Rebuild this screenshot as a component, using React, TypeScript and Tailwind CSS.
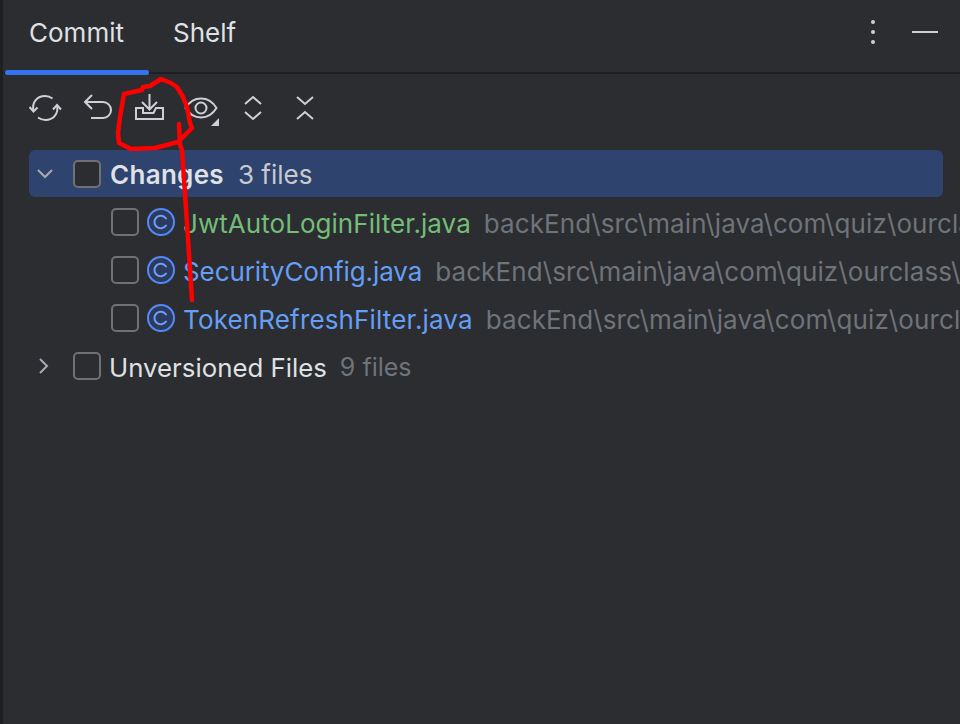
import React from 'react';

const font = { fontFamily: 'Inter, "Noto Sans", sans-serif' };

function Check() {
  return <span className="h-[28px] w-[28px] shrink-0 rounded-[5px] border-2 border-[#6f7175] bg-[#2b2d30]" />;
}

function ClassIcon() {
  return (
    <svg width="28" height="28" viewBox="0 0 28 28" className="block shrink-0" fill="none">
      <circle cx="14" cy="14" r="13" fill="#2c3a5e" stroke="#548af7" strokeWidth="2" />
      <path d="M19 10.500a6.300 6.300 0 1 0 0 7" stroke="#6ea0f8" strokeWidth="2" strokeLinecap="round" />
    </svg>
  );
}

// viewBox uses the picture's own pixel coordinates, easier to trace the icons
function ToolIcon({ x, w, children }: { x: number; w: number; children: React.ReactNode }) {
  return (
    <svg width={w} height="34" viewBox={`${x} 92 ${w} 34`} fill="none" stroke="#ced0d6" strokeWidth="2" className="shrink-0">
      {children}
    </svg>
  );
}

const files = [
  { name: 'JwtAutoLoginFilter.java', path: 'backEnd\\src\\main\\java\\com\\quiz\\ourclass', color: 'text-[#73bd79] tracking-[0.05px]' },
  { name: 'SecurityConfig.java', path: 'backEnd\\src\\main\\java\\com\\quiz\\ourclass\\', color: 'text-[#659ff5] tracking-[-0.1px]' },
  { name: 'TokenRefreshFilter.java', path: 'backEnd\\src\\main\\java\\com\\quiz\\ourclass', color: 'text-[#659ff5] tracking-[0.15px]' },
];

export default function App() {
  return (
    <div style={font} className="relative h-[724px] w-[960px] overflow-hidden border-l-[3px] border-l-[#1e1f22] bg-[#2b2d30] pl-[1px] text-[#dfe1e5]">
      {/* Tabs */}
      <div className="flex h-[74px] items-start border-b-2 border-[#1e1f22]">
        <div className="relative flex h-[74px] w-[145px] shrink-0 items-center justify-center pb-[8px] text-[26px] leading-none">
          Commit
          <span className="absolute bottom-[-1px] left-[1px] h-[5px] w-[144px] rounded-full bg-[#3574f0]" />
        </div>
        <div className="flex h-[74px] items-center pb-[8px] pl-[24px] text-[26px] leading-none">Shelf</div>
        <div className="ml-auto flex h-[64px] items-center gap-[37px] pr-[22px]">
          <div className="flex flex-col gap-[6px]">
            <span className="h-[4px] w-[4px] rounded-full bg-[#ced0d6]" />
            <span className="h-[4px] w-[4px] rounded-full bg-[#ced0d6]" />
            <span className="h-[4px] w-[4px] rounded-full bg-[#ced0d6]" />
          </div>
          <span className="h-[2px] w-[26px] bg-[#ced0d6]" />
        </div>
      </div>

      {/* Toolbar */}
      <div className="flex h-[70px] items-center pl-[25px]">
        <ToolIcon x={29} w={34}>
          <path d="M29.500 107l4 4.500 4-4" />
          <path d="M33.500 111c-2-9 4-15 11.500-15 3 0 5.500 1 7.500 2.500" />
          <path d="M53 109.500l4-4.500 4 4.500" />
          <path d="M57 105c2 9-4 15-11.500 15-3 0-5.500-1-7.500-2.500" />
        </ToolIcon>
        <div className="ml-[21px]">
          <ToolIcon x={84} w={29}>
            <path d="M92 95l-7 7 7 7" />
            <path d="M85 102h18a7.800 7.800 0 0 1 0 16H91" />
          </ToolIcon>
        </div>
        <div className="ml-[22px]">
          <ToolIcon x={135} w={29}>
            <path d="M149.500 94v15M142 102l7.500 7.500L157 102" />
            <path d="M143 108h-7v11h27v-11h-7l-2.500 5h-10.500z" />
          </ToolIcon>
        </div>
        <div className="ml-[20px]">
          <ToolIcon x={184} w={36}>
            <path d="M185.500 108c4-6.500 9.500-9.500 15.500-9.500s11.500 3 15.500 9.500c-4 6.500-9.500 9.500-15.500 9.500s-11.500-3-15.500-9.500z" />
            <circle cx="201" cy="108" r="5.500" />
            <path d="M219 118v8h-8z" fill="#ced0d6" stroke="none" />
          </ToolIcon>
        </div>
        <div className="ml-[24px]">
          <ToolIcon x={244} w={18}>
            <path d="M245 104l8-7 8 7M245 112l8 7 8-7" />
          </ToolIcon>
        </div>
        <div className="ml-[34px]">
          <ToolIcon x={296} w={18}>
            <path d="M297 97l8 7 8-7M297 119l8-7 8 7" />
          </ToolIcon>
        </div>
      </div>

      {/* Change tree */}
      <div className="flex flex-col pl-[25px] pr-[17px] pt-[6px] text-[26px] leading-none">
        <div className="mb-[1px] flex h-[47px] items-center rounded-[6px] bg-[#2e436e]">
          <svg width="18" height="12" viewBox="0 0 18 12" fill="none" stroke="#a8abb2" strokeWidth="2" className="ml-[7px] mr-[19px] shrink-0">
            <path d="M2 2l7 7 7-7" />
          </svg>
          <Check />
          <span className="ml-[9px] pt-[3px] font-semibold tracking-[0.3px]">Changes</span>
          <span className="ml-[14px] pt-[3px] text-[#c8cad0]">3 files</span>
        </div>
        {files.map((f) => (
          <div key={f.name} className="flex h-[48px] items-center whitespace-nowrap pl-[82px]">
            <Check />
            <span className="ml-[8px]"><ClassIcon /></span>
            <span className={`ml-[8px] pt-[3px] ${f.color}`}>{f.name}</span>
            <span className="ml-[13px] pt-[3px] tracking-[0.1px] text-[#6f737a]">{f.path}</span>
          </div>
        ))}
        <div className="flex h-[48px] items-center">
          <svg width="12" height="18" viewBox="0 0 12 18" fill="none" stroke="#a8abb2" strokeWidth="2" className="ml-[9px] mr-[23px] shrink-0">
            <path d="M2 2l7 7-7 7" />
          </svg>
          <Check />
          <span className="ml-[8px] pt-[3px] text-[25.8px]">Unversioned Files</span>
          <span className="ml-[13px] pt-[3px] text-[25px] text-[#6f737a]">9 files</span>
        </div>
      </div>

      {/* Red pen annotation on top of the screenshot */}
      <svg width="960" height="724" viewBox="0 0 960 724" fill="none" stroke="#ff0000" strokeWidth="4.500" strokeLinecap="round" strokeLinejoin="round" className="pointer-events-none absolute left-[-3px] top-0">
        <path d="M124 94l18-4 1-3 7-1 11-7 10 4 6 4 6 10 4 10 3 16 2 5-9 9-5 5-23 6-24 1-12-6-1-10 2-16z" />
        <path d="M179 124l1 21 2 5 3 43 7 107" />
      </svg>
    </div>
  );
}
